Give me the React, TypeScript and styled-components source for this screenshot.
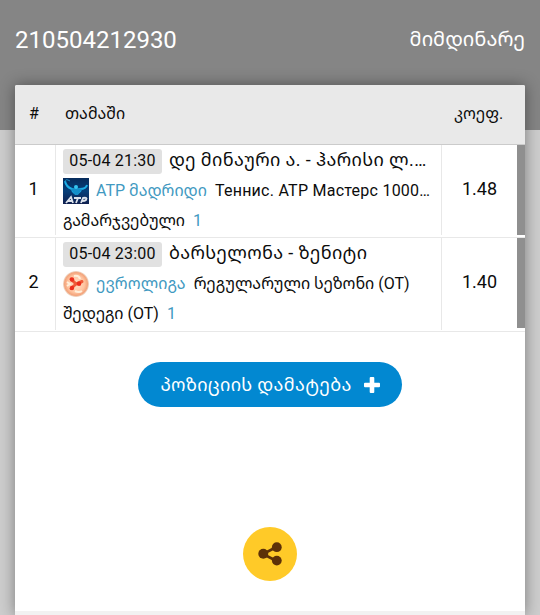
import React from "react";
import styled, { createGlobalStyle } from "styled-components";

const Global = createGlobalStyle`
  * { box-sizing: border-box; }
  body {
    margin: 0;
    background: #cdcdcd;
    font-family: Roboto, "Noto Sans Georgian", "DejaVu Sans", sans-serif;
    color: #0c0c0c;
    overflow: hidden;
  }
`;

const Page = styled.div`
  height: 615px;
  padding: 0 15px;
  background: linear-gradient(#858585 130px, #cdcdcd 130px);
`;

const TopBar = styled.header`
  height: 85px;
  padding-top: 24px;
  display: flex;
  justify-content: space-between;
  color: #fff;
  font-size: 24px;
  line-height: 32px;
`;

const Status = styled.span`
  font-size: 20px;
  line-height: 31px;
`;

const Card = styled.main`
  height: 530px;
  border-radius: 2px 2px 0 0;
  border-bottom: 4px solid #f2f2f2;
  background: #fff;
  box-shadow: 0 0 15px rgba(0, 0, 0, 0.4);
`;

const columns = "41px 386px 83px";

const TableHead = styled.div`
  display: grid;
  grid-template-columns: ${columns};
  height: 60px;
  border-bottom: 1px solid #cbcbcb;
  border-radius: 2px 2px 0 0;
  background: #e9e9e9;
  font-size: 16px;
  line-height: 57px;
`;

const HeadCell = styled.div<{ $indent: number }>`
  padding-left: ${(p) => p.$indent}px;
  white-space: nowrap;
`;

const Row = styled.div<{ $height: number }>`
  display: grid;
  grid-template-columns: ${columns};
  height: ${(p) => p.$height}px;
  border-bottom: 1px solid #e8e8e8;
`;

const Index = styled.div<{ $gap: number }>`
  height: calc(100% - ${(p) => p.$gap}px);
  border-right: 1px solid #e8e8e8;
  padding-right: 3px;
  font-size: 18px;
  line-height: 88px;
  text-align: center;
`;

const Game = styled.div<{ $gap: number }>`
  height: calc(100% - ${(p) => p.$gap}px);
  border-right: 1px solid #e8e8e8;
  padding: 0 8px 0 7px;
  min-width: 0;
`;

const Odds = styled.div`
  height: 90px;
  border-right: 8px solid #8f8f8f;
  font-size: 18px;
  line-height: 88px;
  text-align: center;
`;

const Line = styled.div`
  display: flex;
  align-items: center;
  height: 30px;
  font-size: 16px;
  line-height: 30px;
  white-space: nowrap;
`;

const GameLine = styled(Line)`
  height: 31px;
`;

const DateTag = styled.span`
  flex: none;
  width: 99px;
  height: 25px;
  margin: 2px 7px 0 0;
  border-radius: 3px;
  background: #e1e1e1;
  line-height: 23px;
  letter-spacing: 0.2px;
  text-align: center;
`;

const Teams = styled.span`
  padding-bottom: 2px;
  font-size: 18px;
  letter-spacing: 0.37px;
`;

const Label = styled.span<{ $blue?: boolean; $spacing?: number }>`
  margin-left: 8px;
  color: ${(p) => (p.$blue ? "#4199c1" : "inherit")};
  letter-spacing: ${(p) => p.$spacing ?? 0}px;
  &:first-child { margin-left: 0; }
`;

const Emblem = styled.svg`
  flex: none;
  width: 26px;
  height: 26px;
  margin-right: -1px;
`;

const AddButton = styled.button`
  display: flex;
  align-items: center;
  justify-content: center;
  gap: 12px;
  width: 264px;
  height: 45px;
  margin: 30px auto 0;
  padding: 0;
  border: 0;
  border-radius: 23px;
  background: #0288d1;
  color: #fff;
  font: 18px Roboto, "Noto Sans Georgian", "DejaVu Sans", sans-serif;
  white-space: nowrap;
`;

const AddText = styled.span`
  padding-bottom: 2px;
  letter-spacing: 0.32px;
`;

const ShareButton = styled.button`
  display: flex;
  align-items: center;
  justify-content: center;
  width: 54px;
  height: 54px;
  margin: 120px auto 0;
  padding: 0;
  border: 0;
  border-radius: 50%;
  background: #ffca28;
`;

const AtpEmblem = () => (
  <Emblem viewBox="0 0 26 26">
    <defs>
      <linearGradient id="atp" x1="0" x2="0" y1="0" y2="1">
        <stop offset="0" stopColor="#062b5b" />
        <stop offset=".5" stopColor="#063f79" />
        <stop offset="1" stopColor="#10204f" />
      </linearGradient>
    </defs>
    <path d="M0 0h26v26H0z" fill="url(#atp)" />
    <path d="M2 3Q3 9 9 11Q13 13 17 11Q23 11 24 7M9 12Q13 19 18 12" fill="none" stroke="#1caee7" strokeWidth="2" />
    <path d="M8 11Q13 9 19 11L15 17H12Z" fill="#148fc9" />
    <circle cx="13" cy="9" r="2" fill="#36c6f1" />
    <path d="M2 4Q2 0 7 3" fill="none" stroke="#168cc3" />
    <path d="M3 25L8 19L10 25M5 23H10M11 20H18M15 20L13 25M18 25L20 20Q25 19 23 22Q22 23 19 23" fill="none" stroke="#dce2eb" strokeWidth="1.8" />
  </Emblem>
);

const LeagueEmblem = () => (
  <Emblem viewBox="0 0 26 26">
    <defs>
      <radialGradient id="ball">
        <stop offset="0" stopColor="#ffe0c8" />
        <stop offset=".65" stopColor="#ffc4a0" />
        <stop offset=".88" stopColor="#f3a47c" />
        <stop offset="1" stopColor="#eee0d2" />
      </radialGradient>
    </defs>
    <circle cx="13" cy="13" r="13" fill="url(#ball)" />
    <path d="M11 5Q16 4 17 8M4 11L7 13L4 15M12 20Q16 22 19 20" fill="none" stroke="#fff0dc" strokeWidth="2" />
    <path d="M8 8L13 13L8 17.5M13 13L19 10.5" fill="none" stroke="#ee5a38" strokeWidth="3" strokeLinecap="round" />
    <g fill="#ed2d1c">
      <circle cx="9" cy="8.5" r="2.2" />
      <circle cx="9" cy="17" r="2.2" />
      <circle cx="16" cy="12.8" r="2.3" />
    </g>
  </Emblem>
);

export default function App() {
  return (
    <Page>
      <Global />
      <TopBar>
        <span>210504212930</span>
        <Status>მიმდინარე</Status>
      </TopBar>
      <Card>
        <TableHead>
          <HeadCell $indent={14}>#</HeadCell>
          <HeadCell $indent={9}>თამაში</HeadCell>
          <HeadCell $indent={12}>კოეფ.</HeadCell>
        </TableHead>
        <Row $height={93}>
          <Index $gap={2}>1</Index>
          <Game $gap={2}>
            <GameLine>
              <DateTag>05-04 21:30</DateTag>
              <Teams>დე მინაური ა. - ჰარისი ლ.…</Teams>
            </GameLine>
            <Line>
              <AtpEmblem />
              <Label $blue>ATP მადრიდი</Label>
              <Label $spacing={0.25}>Теннис. ATP Мастерс 1000…</Label>
            </Line>
            <Line>
              <Label $spacing={-0.08}>გამარჯვებული</Label>
              <Label $blue>1</Label>
            </Line>
          </Game>
          <Odds>1.48</Odds>
        </Row>
        <Row $height={94}>
          <Index $gap={1}>2</Index>
          <Game $gap={1}>
            <GameLine>
              <DateTag>05-04 23:00</DateTag>
              <Teams>ბარსელონა - ზენიტი</Teams>
            </GameLine>
            <Line>
              <LeagueEmblem />
              <Label $blue $spacing={0.12}>ევროლიგა</Label>
              <Label>რეგულარული სეზონი (OT)</Label>
            </Line>
            <Line>
              <Label>შედეგი (OT)</Label>
              <Label $blue>1</Label>
            </Line>
          </Game>
          <Odds>1.40</Odds>
        </Row>
        <AddButton>
          <AddText>პოზიციის დამატება</AddText>
          <svg width="16" height="16" viewBox="0 0 16 16">
            <path d="M5.7 1Q5.7 0 6.7 0H9.3Q10.3 0 10.3 1V5.7H15Q16 5.7 16 6.7V9.3Q16 10.3 15 10.3H10.3V15Q10.3 16 9.3 16H6.7Q5.7 16 5.7 15V10.3H1Q0 10.3 0 9.3V6.7Q0 5.7 1 5.7H5.7Z" fill="#fff" />
          </svg>
        </AddButton>
        <ShareButton aria-label="Share">
          <svg width="24" height="24" viewBox="0 0 24 24" fill="#5d3108" stroke="#5d3108">
            <path d="M18.5 5L5 12L18.5 19" fill="none" strokeWidth="2.6" />
            <g stroke="none">
              <circle cx="5.3" cy="11.8" r="5" />
              <circle cx="18.8" cy="5.2" r="4.9" />
              <circle cx="18.8" cy="18.6" r="4.9" />
            </g>
          </svg>
        </ShareButton>
      </Card>
    </Page>
  );
}
